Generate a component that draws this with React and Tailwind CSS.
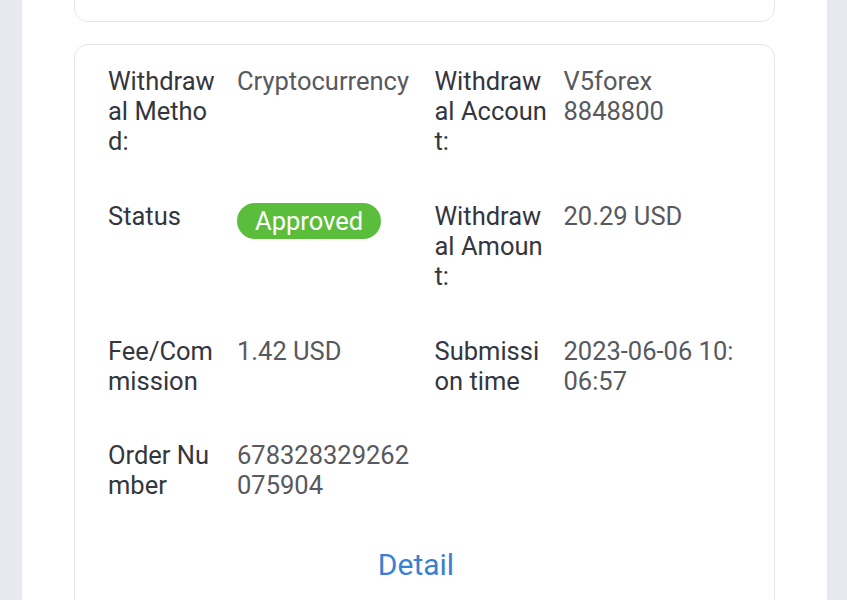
import React from 'react';

const rows = [
  [
    { label: 'Withdrawal Method:', value: 'Cryptocurrency' },
    { label: 'Withdrawal Account:', value: 'V5forex', sub: '8848800' },
  ],
  [
    { label: 'Status', badge: 'Approved' },
    { label: 'Withdrawal Amount:', value: '20.29 USD' },
  ],
  [
    { label: 'Fee/Commission', value: '1.42 USD' },
    { label: 'Submission time', value: '2023-06-06 10:06:57' },
  ],
  [{ label: 'Order Number', value: '678328329262075904' }],
];

function Field({ item }) {
  return (
    <div className="flex items-start">
      <div className="w-[114px] shrink-0 mr-[15px] break-all text-[#34363d]">{item.label}</div>
      {item.badge ? (
        <span className="h-[36px] mt-[2px] px-[18px] rounded-full bg-[#5bbd3c] text-white flex items-center">
          {item.badge}
        </span>
      ) : (
        <div className="flex-1 min-w-0 break-all text-[#58595e]">
          {item.value}
          {item.sub && <div>{item.sub}</div>}
        </div>
      )}
    </div>
  );
}

export default function App() {
  return (
    <div
      className="h-[600px] overflow-hidden bg-[#e6e9f0] pl-[22px] pr-[20px]"
      style={{ fontFamily: 'Roboto, "Noto Sans", sans-serif' }}
    >
      <div className="bg-white h-full flex flex-col px-[52px]">
        {/* previous card, cut off at the top */}
        <div className="-mt-[30px] h-[52px] shrink-0 rounded-[14px] border border-[#e6e6e6]" />

        <div className="mt-[22px] shrink-0 rounded-[14px] border border-[#e6e6e6] pt-[21px] pl-[33px] pr-[34px] pb-10 text-[25.5px] leading-[30px]">
          <div className="flex flex-col gap-[45px]">
            {rows.map((row, i) => (
              <div key={i} className={`grid grid-cols-2 gap-x-[21px] ${i === 3 ? '-mt-[1px]' : ''}`}>
                {row.map((item) => (
                  <Field key={item.label} item={item} />
                ))}
              </div>
            ))}
          </div>
          <div className="mt-[47px] text-center text-[30px] leading-[36px] text-[#3a80d2] pr-[16px]">Detail</div>
        </div>
      </div>
    </div>
  );
}
